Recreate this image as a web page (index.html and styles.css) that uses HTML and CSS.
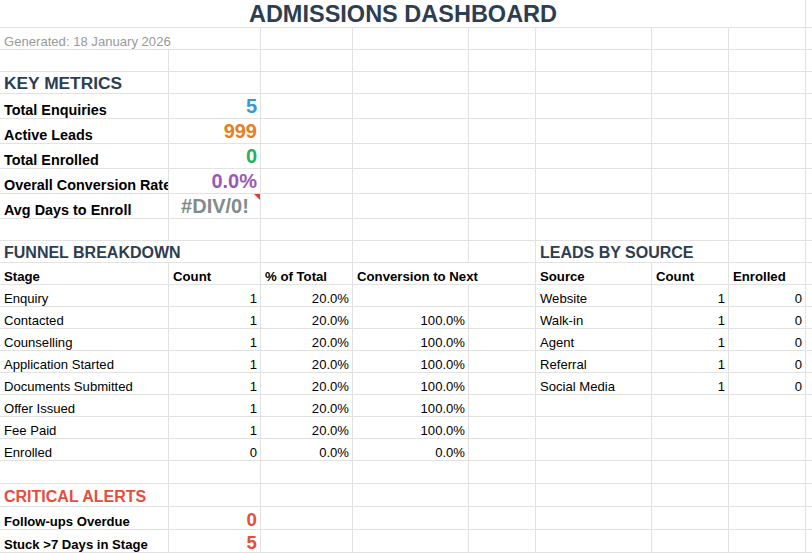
FILE: index.html
```html
<!DOCTYPE html>
<html lang="en">
<head>
<meta charset="utf-8">
<title>Admissions Dashboard</title>
<link rel="stylesheet" href="styles.css">
</head>
<body>
<div class="sheet">
  <!-- row 1 -->
  <div class="c ctr title span8">ADMISSIONS DASHBOARD</div><div class="c"></div>
  <!-- row 2 -->
  <div class="c gen span2">Generated: 18 January 2026</div><div class="c"></div><div class="c"></div><div class="c"></div><div class="c"></div><div class="c"></div><div class="c"></div><div class="c"></div>
  <!-- row 3 -->
  <div class="c"></div><div class="c"></div><div class="c"></div><div class="c"></div><div class="c"></div><div class="c"></div><div class="c"></div><div class="c"></div><div class="c"></div>
  <!-- row 4 -->
  <div class="c section">KEY METRICS</div><div class="c"></div><div class="c"></div><div class="c"></div><div class="c"></div><div class="c"></div><div class="c"></div><div class="c"></div><div class="c"></div>
  <!-- rows 5-9 -->
  <div class="c metric">Total Enquiries</div><div class="c r val blue">5</div><div class="c"></div><div class="c"></div><div class="c"></div><div class="c"></div><div class="c"></div><div class="c"></div><div class="c"></div>
  <div class="c metric">Active Leads</div><div class="c r val orange">999</div><div class="c"></div><div class="c"></div><div class="c"></div><div class="c"></div><div class="c"></div><div class="c"></div><div class="c"></div>
  <div class="c metric">Total Enrolled</div><div class="c r val green">0</div><div class="c"></div><div class="c"></div><div class="c"></div><div class="c"></div><div class="c"></div><div class="c"></div><div class="c"></div>
  <div class="c metric">Overall Conversion Rate</div><div class="c r val purple">0.0%</div><div class="c"></div><div class="c"></div><div class="c"></div><div class="c"></div><div class="c"></div><div class="c"></div><div class="c"></div>
  <div class="c metric">Avg Days to Enroll</div><div class="c ctr val err">#DIV/0!</div><div class="c"></div><div class="c"></div><div class="c"></div><div class="c"></div><div class="c"></div><div class="c"></div><div class="c"></div>
  <!-- row 10 -->
  <div class="c"></div><div class="c"></div><div class="c"></div><div class="c"></div><div class="c"></div><div class="c"></div><div class="c"></div><div class="c"></div><div class="c"></div>
  <!-- row 11 -->
  <div class="c sub span2">FUNNEL BREAKDOWN</div><div class="c"></div><div class="c"></div><div class="c"></div><div class="c sub span2">LEADS BY SOURCE</div><div class="c"></div><div class="c"></div>
  <!-- row 12 -->
  <div class="c hd">Stage</div><div class="c hd">Count</div><div class="c hd">% of Total</div><div class="c hd span2">Conversion to Next</div><div class="c hd">Source</div><div class="c hd">Count</div><div class="c hd">Enrolled</div><div class="c"></div>
  <!-- rows 13-20 -->
  <div class="c">Enquiry</div><div class="c r">1</div><div class="c r">20.0%</div><div class="c r"></div><div class="c"></div><div class="c">Website</div><div class="c r">1</div><div class="c r">0</div><div class="c"></div>
  <div class="c">Contacted</div><div class="c r">1</div><div class="c r">20.0%</div><div class="c r">100.0%</div><div class="c"></div><div class="c">Walk-in</div><div class="c r">1</div><div class="c r">0</div><div class="c"></div>
  <div class="c">Counselling</div><div class="c r">1</div><div class="c r">20.0%</div><div class="c r">100.0%</div><div class="c"></div><div class="c">Agent</div><div class="c r">1</div><div class="c r">0</div><div class="c"></div>
  <div class="c">Application Started</div><div class="c r">1</div><div class="c r">20.0%</div><div class="c r">100.0%</div><div class="c"></div><div class="c">Referral</div><div class="c r">1</div><div class="c r">0</div><div class="c"></div>
  <div class="c">Documents Submitted</div><div class="c r">1</div><div class="c r">20.0%</div><div class="c r">100.0%</div><div class="c"></div><div class="c">Social Media</div><div class="c r">1</div><div class="c r">0</div><div class="c"></div>
  <div class="c">Offer Issued</div><div class="c r">1</div><div class="c r">20.0%</div><div class="c r">100.0%</div><div class="c"></div><div class="c"></div><div class="c"></div><div class="c"></div><div class="c"></div>
  <div class="c">Fee Paid</div><div class="c r">1</div><div class="c r">20.0%</div><div class="c r">100.0%</div><div class="c"></div><div class="c"></div><div class="c"></div><div class="c"></div><div class="c"></div>
  <div class="c">Enrolled</div><div class="c r">0</div><div class="c r">0.0%</div><div class="c r">0.0%</div><div class="c"></div><div class="c"></div><div class="c"></div><div class="c"></div><div class="c"></div>
  <!-- row 21 -->
  <div class="c"></div><div class="c"></div><div class="c"></div><div class="c"></div><div class="c"></div><div class="c"></div><div class="c"></div><div class="c"></div><div class="c"></div>
  <!-- row 22 -->
  <div class="c alert-title">CRITICAL ALERTS</div><div class="c"></div><div class="c"></div><div class="c"></div><div class="c"></div><div class="c"></div><div class="c"></div><div class="c"></div><div class="c"></div>
  <!-- rows 23-24 -->
  <div class="c alert">Follow-ups Overdue</div><div class="c r alert-val">0</div><div class="c"></div><div class="c"></div><div class="c"></div><div class="c"></div><div class="c"></div><div class="c"></div><div class="c"></div>
  <div class="c alert">Stuck &gt;7 Days in Stage</div><div class="c r alert-val">5</div><div class="c"></div><div class="c"></div><div class="c"></div><div class="c"></div><div class="c"></div><div class="c"></div><div class="c"></div>
  <!-- row 25 -->
  <div class="c"></div><div class="c"></div><div class="c"></div><div class="c"></div><div class="c"></div><div class="c"></div><div class="c"></div><div class="c"></div><div class="c"></div>
</div>
</body>
</html>
```
FILE: styles.css
```css
* { box-sizing: border-box; }
html, body {
  margin: 0;
  padding: 0;
  background: #fff;
  overflow: hidden;
}
body {
  font-family: "Liberation Sans", Arial, sans-serif;
  color: #000;
}
.sheet {
  display: grid;
  grid-template-columns: 169px 92px 92px 116px 67px 116px 77px 77px 1fr;
  grid-template-rows: 28px 22px 22px 22px repeat(5, 25px) 22px 22px 22px repeat(8, 22px) repeat(4, 23px) 30px;
  width: 812px;
  height: 553px;
  overflow: hidden;
}
.c {
  display: flex;
  align-items: flex-end;
  justify-content: flex-start;
  padding: 0 3px 0 4px;
  border-right: 1px solid #e2e2e2;
  border-bottom: 1px solid #e2e2e2;
  overflow: hidden;
  white-space: nowrap;
  font-size: 13.1px;
  line-height: normal;
  min-width: 0;
}
.r { justify-content: flex-end; }
.ctr { justify-content: center; }
.span2 { grid-column: span 2; }
.span8 { grid-column: span 8; }

.title {
  font-size: 23.5px;
  line-height: 25px;
  font-weight: bold;
  color: #2c3e50;
}
.gen { color: #999; }
.section {
  font-size: 17.33px;
  line-height: 20px;
  font-weight: bold;
  color: #2c3e50;
}
.metric {
  font-size: 14.4px;
  font-weight: bold;
}
.val {
  font-size: 20px;
  font-weight: bold;
}
.blue { color: #3498db; }
.orange { color: #e67e22; }
.green { color: #27ae60; }
.purple { color: #9b59b6; }
.err {
  color: #7f8c8d;
  position: relative;
}
.err::after {
  content: "";
  position: absolute;
  top: 0;
  right: 0;
  width: 0;
  height: 0;
  border-top: 6px solid #e53935;
  border-left: 6px solid transparent;
}
.sub {
  font-size: 16px;
  font-weight: bold;
  color: #2c3e50;
}
.hd {
  font-size: 13.2px;
  font-weight: bold;
}
.alert-title {
  font-size: 16px;
  font-weight: bold;
  color: #e74c3c;
}
.alert {
  font-size: 13.1px;
  font-weight: bold;
}
.alert-val {
  font-size: 18.67px;
  line-height: 19.5px;
  font-weight: bold;
  color: #e74c3c;
}
```
